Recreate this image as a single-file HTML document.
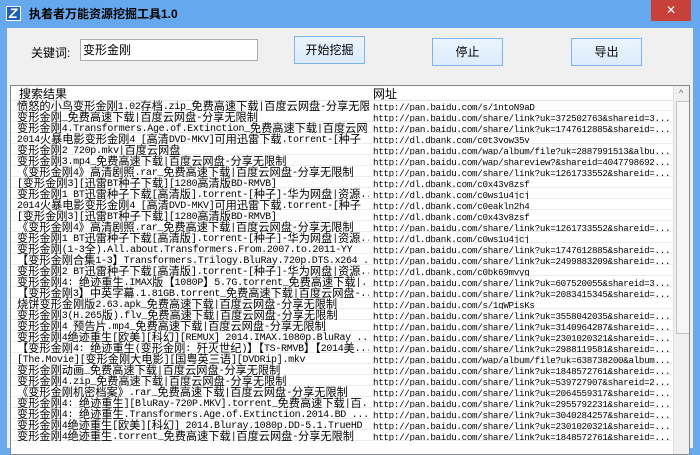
<!DOCTYPE html>
<html><head><meta charset="utf-8"><style>
*{margin:0;padding:0;box-sizing:border-box}
body{width:700px;height:448px;overflow:hidden;background:#6aa9ec;font-family:"Liberation Sans","Noto Sans CJK SC",sans-serif;position:relative}
.title{position:absolute;left:0;top:0;width:700px;height:28px;background:#66a8ee}
.icon{position:absolute;left:6px;top:6px;width:15px;height:15px;background:#1d5fb8;border:1px solid #fff}
.icon:after{content:"Z";position:absolute;left:2px;top:-2px;color:#fff;font:bold 14px "Liberation Sans";font-style:italic}
.ttext{position:absolute;left:29px;top:5px;font-size:12px;font-weight:bold;color:#000}
.close{position:absolute;left:651px;top:0;width:40px;height:21px;background:#c7413a;color:#fff;text-align:center;font-size:12px;line-height:21px}
.client{position:absolute;left:7px;top:28px;width:686px;height:420px;background:#f0f0f0}
.lbl{position:absolute;left:31px;top:44px;font-size:12px}
.inp{position:absolute;left:80px;top:39px;width:178px;height:22px;background:#fff;border:1px solid #abadb3;font-size:12px;padding:2px 2px;line-height:16px}
.btn{position:absolute;width:71px;height:28px;background:linear-gradient(#eaf4fc,#dcecfc);border:1px solid #7eb4ea;font-size:12px;text-align:center;line-height:26px}
.list{position:absolute;left:10px;top:85px;width:680px;height:370px;background:#fff;border:1px solid #828790;overflow:hidden}
.hdr{position:absolute;left:0;top:0;height:15px;width:662px;border-bottom:1px solid #e5e5e5;font-size:12px;line-height:17px}
.row{position:absolute;left:0;height:11px;width:662px;border-bottom:1px solid #ececec;font-family:"Noto Sans CJK SC",sans-serif;font-size:11.2px;white-space:nowrap}
.c1,.c2{position:absolute;top:-1px;height:12px;overflow:hidden;display:block}
.c1 span,.c2 span{display:block;line-height:12px;height:12px;padding-top:1px}
.row i{font-style:normal;font-family:"Liberation Mono",monospace;font-size:10px;letter-spacing:-0.3px;position:relative;top:-1px;line-height:11px}
.c1{left:6px;width:352px}
.c2{left:362px;width:300px}
.c2 i{font-size:9.2px;letter-spacing:-0.3px;top:0}
.sb{position:absolute;left:662px;top:0;width:17px;height:370px;background:#f0f0f0;border-left:1px solid #e0e0e0}
.th{position:absolute;left:2px;top:15px;width:14px;height:233px;background:#f6f6f6;border:1px solid #c4c4c4}
</style></head><body>
<div class="title"><div class="icon"></div><div class="ttext">执着者万能资源挖掘工具1.0</div><div class="close">✕</div></div>
<div class="client"></div>
<div class="lbl">关键词:</div>
<div class="inp">变形金刚</div>
<div class="btn" style="left:294px;top:36px">开始挖掘</div>
<div class="btn" style="left:432px;top:38px">停止</div>
<div class="btn" style="left:571px;top:38px">导出</div>
<div class="list">
<div class="hdr"><span style="position:absolute;left:8px">搜索结果</span><span style="position:absolute;left:362px">网址</span></div>
<div class="sb"><div style="position:absolute;left:5px;top:2px;font-size:9px;color:#666">^</div><div class="th"></div></div>
<div id="rows"></div>
</div>
<script>
var L=["愤怒的小鸟变形金刚1.02存档.zip_免费高速下载|百度云网盘-分享无限制","变形金刚_免费高速下载|百度云网盘-分享无限制","变形金刚4.Transformers.Age.of.Extinction_免费高速下载|百度云网...","2014火暴电影变形金刚4 [高清DVD-MKV]可用迅雷下载.torrent-[种子 ...","变形金刚2 720p.mkv|百度云网盘","变形金刚3.mp4_免费高速下载|百度云网盘-分享无限制","《变形金刚4》高清剧照.rar_免费高速下载|百度云网盘-分享无限制","[变形金刚3][迅雷BT种子下载][1280高清版BD-RMVB]","变形金刚1 BT迅雷种子下载[高清版].torrent-[种子]-华为网盘|资源...","2014火暴电影变形金刚4 [高清DVD-MKV]可用迅雷下载.torrent-[种子 ...","[变形金刚3][迅雷BT种子下载][1280高清版BD-RMVB]","《变形金刚4》高清剧照.rar_免费高速下载|百度云网盘-分享无限制","变形金刚1 BT迅雷种子下载[高清版].torrent-[种子]-华为网盘|资源...","变形金刚(1-3全).All.about.Transformers.From.2007.to.2011-YY","【变形金刚合集1-3】Transformers.Trilogy.BluRay.720p.DTS.x264 ...","变形金刚2 BT迅雷种子下载[高清版].torrent-[种子]-华为网盘|资源...","变形金刚4: 绝迹重生.IMAX版【1080P】5.7G.torrent_免费高速下载|...","【变形金刚3】中英字幕.1.81GB.torrent_免费高速下载|百度云网盘-...","烧饼变形金刚版2.63.apk_免费高速下载|百度云网盘-分享无限制","变形金刚3(H.265版).flv_免费高速下载|百度云网盘-分享无限制","变形金刚4 预告片.mp4_免费高速下载|百度云网盘-分享无限制","变形金刚4绝迹重生[欧美][科幻][REMUX] 2014.IMAX.1080p.BluRay ...","【变形金刚4: 绝迹重生(变形金刚: 歼灭世纪)】【TS-RMVB】【2014美...","[The.Movie][变形金刚大电影][国粤英三语][DVDRip].mkv","变形金刚动画_免费高速下载|百度云网盘-分享无限制","变形金刚4.zip_免费高速下载|百度云网盘-分享无限制","《变形金刚机密档案》.rar_免费高速下载|百度云网盘-分享无限制","变形金刚4: 绝迹重生][BluRay-720P.MKV].torrent_免费高速下载|百...","变形金刚4: 绝迹重生.Transformers.Age.of.Extinction.2014.BD ...","变形金刚4绝迹重生[欧美][科幻] 2014.Bluray.1080p.DD-5.1.TrueHD","变形金刚4绝迹重生.torrent_免费高速下载|百度云网盘-分享无限制"];
var P="http://pan.baidu.com/share/link?uk=";
var R=["http://pan.baidu.com/s/1ntoN9aD",P+"372502763&shareid=3...",P+"1747612885&shareid=...","http://dl.dbank.com/c0t3vow35v","http://pan.baidu.com/wap/album/file?uk=2887991513&albu...","http://pan.baidu.com/wap/shareview?&shareid=4047798692...",P+"1261733552&shareid=...","http://dl.dbank.com/c0x43v8zsf","http://dl.dbank.com/c0ws1u4jcj","http://dl.dbank.com/c0eakln2h4","http://dl.dbank.com/c0x43v8zsf",P+"1261733552&shareid=...","http://dl.dbank.com/c0ws1u4jcj",P+"1747612885&shareid=...",P+"2499883209&shareid=...","http://dl.dbank.com/c0bk69mvyg",P+"607520055&shareid=3...",P+"2083415345&shareid=...","http://pan.baidu.com/s/1qWPisKs",P+"3558042035&shareid=...",P+"3140964287&shareid=...",P+"2301020321&shareid=...",P+"2988119581&shareid=...","http://pan.baidu.com/wap/album/file?uk=638738200&album...",P+"1848572761&shareid=...",P+"539727907&shareid=2...",P+"2064559317&shareid=...",P+"2955792231&shareid=...",P+"3040284257&shareid=...",P+"2301020321&shareid=...",P+"1848572761&shareid=..."];
function w(s){return s.replace(/&/g,"&amp;").replace(/[\x20-\x7e]+/g,function(m){return "<i>"+m+"</i>";});}
var h="";for(var i=0;i<L.length;i++){h+='<div class="row" style="top:'+(14+i*11)+'px"><div class="c1"><span>'+w(L[i])+'</span></div><div class="c2"><span>'+w(R[i])+'</span></div></div>';}
document.getElementById("rows").innerHTML=h;
</script>
</body></html>
